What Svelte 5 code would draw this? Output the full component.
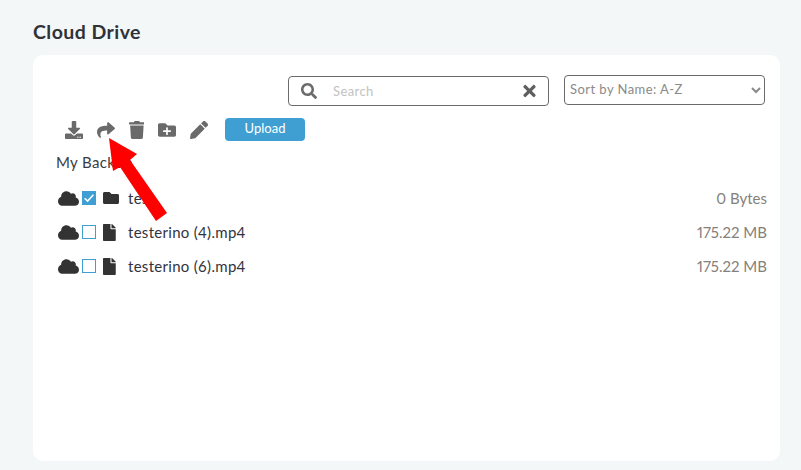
<script>
  const P = {
    download: ['0 0 512 512', 'M216 0h80c13.3 0 24 10.7 24 24v168h87.7c17.8 0 26.7 21.5 14.1 34.1L269.7 378.3c-7.5 7.5-19.8 7.5-27.3 0L90.1 226.1c-12.6-12.6-3.7-34.1 14.1-34.1H192V24c0-13.3 10.7-24 24-24zm296 376v112c0 13.3-10.7 24-24 24H24c-13.3 0-24-10.7-24-24V376c0-13.3 10.7-24 24-24h146.7l49 49c20.1 20.1 52.5 20.1 72.6 0l49-49H488c13.3 0 24 10.7 24 24zm-124 88c0-11-9-20-20-20s-20 9-20 20 9 20 20 20 20-9 20-20zm64 0c0-11-9-20-20-20s-20 9-20 20 9 20 20 20 20-9 20-20z'],
    share: ['0 0 512 512', 'M503.691 189.836L327.687 37.851C312.281 24.546 288 35.347 288 56.015v80.053C127.371 137.907 0 170.1 0 322.326c0 61.441 39.581 122.309 83.333 154.132 13.653 9.931 33.111-2.533 28.077-18.631C66.066 312.814 132.917 274.316 288 272.085V360c0 20.7 24.3 31.453 39.687 18.164l176.004-152c11.071-9.562 11.086-26.753 0-36.328z'],
    trash: ['0 0 448 512', 'M432 32H312l-9.4-18.7A24 24 0 0 0 281.1 0H166.8a23.72 23.72 0 0 0-21.4 13.3L136 32H16A16 16 0 0 0 0 48v32a16 16 0 0 0 16 16h416a16 16 0 0 0 16-16V48a16 16 0 0 0-16-16zM53.2 467a48 48 0 0 0 47.9 45h245.8a48 48 0 0 0 47.9-45L416 128H32z'],
    folderPlus: ['0 0 512 512', 'M464 128H272l-64-64H48C21.49 64 0 85.49 0 112v288c0 26.51 21.49 48 48 48h416c26.51 0 48-21.49 48-48V176c0-26.51-21.49-48-48-48zm-96 168c0 8.84-7.16 16-16 16h-72v72c0 8.84-7.16 16-16 16h-16c-8.84 0-16-7.16-16-16v-72h-72c-8.84 0-16-7.16-16-16v-16c0-8.84 7.16-16 16-16h72v-72c0-8.84 7.16-16 16-16h16c8.84 0 16 7.16 16 16v72h72c8.84 0 16 7.16 16 16v16z'],
    pencil: ['0 0 512 512', 'M497.9 142.1l-46.1 46.1c-4.7 4.7-12.3 4.7-17 0l-111-111c-4.7-4.7-4.7-12.3 0-17l46.1-46.1c18.7-18.7 49.1-18.7 67.9 0l60.1 60.1c18.8 18.7 18.8 49.1 0 67.9zM284.2 99.8L21.6 362.4.4 483.9c-2.9 16.4 11.4 30.6 27.8 27.8l121.5-21.3 262.6-262.6c4.7-4.7 4.7-12.3 0-17l-111-111c-4.8-4.7-12.4-4.7-17.1 0z'],
    search: ['0 0 512 512', 'M505 442.7L405.3 343c-4.5-4.5-10.6-7-17-7H372c27.6-35.3 44-79.7 44-128C416 93.1 322.9 0 208 0S0 93.1 0 208s93.1 208 208 208c48.3 0 92.7-16.4 128-44v16.3c0 6.4 2.5 12.5 7 17l99.7 99.7c9.4 9.4 24.6 9.4 33.9 0l28.3-28.3c9.4-9.4 9.4-24.6.1-34zM208 336c-70.7 0-128-57.2-128-128 0-70.7 57.2-128 128-128 70.7 0 128 57.2 128 128 0 70.7-57.2 128-128 128z'],
    times: ['0 0 352 512', 'M242.72 256l100.07-100.07c12.28-12.28 12.28-32.19 0-44.48l-22.24-22.24c-12.28-12.28-32.19-12.28-44.48 0L176 189.28 75.93 89.21c-12.28-12.28-32.19-12.28-44.48 0L9.21 111.45c-12.28 12.28-12.28 32.19 0 44.48L109.28 256 9.21 356.07c-12.28 12.28-12.28 32.19 0 44.48l22.24 22.24c12.28 12.28 32.2 12.28 44.48 0L176 322.72l100.07 100.07c12.28 12.28 32.2 12.28 44.48 0l22.24-22.24c12.28-12.28 12.28-32.19 0-44.48L242.72 256z'],
    cloud: ['0 0 640 512', 'M537.6 226.6c4.1-10.7 6.4-22.4 6.4-34.6 0-53-43-96-96-96-19.7 0-38.1 6-53.3 16.2C367 64.2 315.3 32 256 32c-88.4 0-160 71.6-160 160 0 2.7.1 5.4.2 8.1C40.2 219.8 0 273.2 0 336c0 79.5 64.5 144 144 144h368c70.7 0 128-57.3 128-128 0-61.9-44-113.6-102.4-125.4z'],
    folder: ['0 0 512 512', 'M464 128H272l-64-64H48C21.49 64 0 85.49 0 112v288c0 26.51 21.49 48 48 48h416c26.51 0 48-21.49 48-48V176c0-26.51-21.49-48-48-48z'],
    file: ['0 0 384 512', 'M224 136V0H24C10.7 0 0 10.7 0 24v464c0 13.3 10.7 24 24 24h336c13.3 0 24-10.7 24-24V160H248c-13.2 0-24-10.8-24-24zm160-14.1v6.1H256V0h6.1c6.4 0 12.5 2.5 17 7l97.9 98c4.5 4.5 7 10.6 7 16.9z']
  };
  const tools = ['download', 'share', 'trash', 'folderPlus', 'pencil'];
  const rows = [
    { type: 'folder', name: 'test', size: '0 Bytes', checked: true },
    { type: 'file', name: 'testerino (4).mp4', size: '175.22 MB', checked: false },
    { type: 'file', name: 'testerino (6).mp4', size: '175.22 MB', checked: false }
  ];
</script>

{#snippet icon(name, cls)}
  <svg class={cls} viewBox={P[name][0]} aria-hidden="true"><path d={P[name][1]} /></svg>
{/snippet}

<main class="page">
  <h1>Cloud Drive</h1>
  <section class="card">
    <div class="filters">
      <div class="search">
        {@render icon('search', 'search-icon')}
        <input type="text" placeholder="Search" />
        {@render icon('times', 'clear-icon')}
      </div>
      <select class="sort">
        <option>Sort by Name: A-Z</option>
      </select>
    </div>
    <div class="toolbar">
      {#each tools as t}
        <button class="tool">{@render icon(t, 'tool-icon')}</button>
      {/each}
      <button class="upload">Upload</button>
    </div>
    <div class="crumb">My Backup</div>
    <ul class="list">
      {#each rows as r}
        <li class="row">
          {@render icon('cloud', 'cloud-icon')}
          <span class="check" class:on={r.checked}>
            {#if r.checked}
              <svg viewBox="0 0 12 12"><path d="M1.6 6.2l3 2.9L10.4 2.8" fill="none" stroke="#fff" stroke-width="1.5" /></svg>
            {/if}
          </span>
          <span class="type">{@render icon(r.type, r.type === 'file' ? 'file-icon' : 'folder-icon')}</span>
          <span class="name">{r.name}</span>
          <span class="size">{r.size}</span>
        </li>
      {/each}
    </ul>
    <svg class="arrow" viewBox="0 0 801 470" aria-hidden="true">
      <polygon points="109,138 137,154 130,160 167,213 156,221 120,167 113,171" fill="#fe0000" />
    </svg>
  </section>
</main>

<style>
  :global(body) {
    margin: 0;
    background: #f3f7f8;
  }
  .page {
    box-sizing: border-box;
    height: 470px;
    padding: 20px 21px 9px 33px;
    display: flex;
    flex-direction: column;
    font-family: Lato, "Open Sans", sans-serif;
    color: #33333d;
    overflow: hidden;
  }
  h1 {
    margin: 0 0 12px;
    font-size: 19.5px;
    line-height: 23px;
    font-weight: 700;
    letter-spacing: 0.45px;
    color: #2f3338;
  }
  .card {
    flex: 1;
    background: #fff;
    border-radius: 10px;
    padding: 20px 13px 0 23px;
  }
  .filters {
    display: flex;
    justify-content: flex-end;
    align-items: flex-start;
    gap: 15px;
    padding-right: 2px;
  }
  .search {
    box-sizing: border-box;
    width: 261px;
    height: 30px;
    margin-top: 1px;
    border: 1px solid #6b6b6b;
    border-radius: 4px;
    display: flex;
    align-items: center;
    padding: 0 12px;
  }
  .search-icon { width: 16px; height: 16px; fill: #6a6a6a; flex: none; }
  .clear-icon { width: 13px; height: 18px; fill: #5f5f5f; flex: none; }
  .search input {
    flex: 1;
    min-width: 0;
    border: 0;
    outline: 0;
    padding: 0 0 0 16px;
    font: 13px Lato, sans-serif;
    letter-spacing: 0.4px;
    background: transparent;
  }
  .search input::placeholder { color: #c2c2c2; opacity: 1; }
  .sort {
    box-sizing: border-box;
    width: 201px;
    height: 30px;
    border: 1px solid #6b6b6b;
    border-radius: 4px;
    background: #fff;
    color: #8a8a8a;
    font: 13px Lato, sans-serif;
    letter-spacing: 0.45px;
    padding: 0 1px 2px;
  }
  .toolbar {
    display: flex;
    align-items: center;
    margin: 12px 0 0 9px;
    gap: 13.75px;
    height: 23px;
  }
  .tool {
    border: 0;
    background: none;
    padding: 0;
    display: flex;
  }
  .tool-icon { height: 18px; width: auto; fill: #6a6a6a; display: block; }
  .upload {
    margin-left: 3.5px;
    width: 80px;
    height: 23px;
    border: 0;
    border-radius: 4px;
    background: #3f9fd3;
    color: #fff;
    font: 13px Lato, sans-serif;
    padding: 0 0 3px;
  }
  .crumb {
    margin: 11px 0 0;
    font-size: 15px;
    line-height: 20px;
    letter-spacing: 0.35px;
    color: #3b3b44;
  }
  .list {
    list-style: none;
    margin: 9px 0 0;
    padding: 0;
  }
  .row {
    display: flex;
    align-items: center;
    height: 34px;
    padding-left: 2px;
  }
  .cloud-icon { width: 21px; height: 17px; fill: #333; flex: none; }
  .check {
    box-sizing: border-box;
    width: 14px;
    height: 14px;
    margin-left: 3px;
    border: 1px solid #3f9fd3;
    flex: none;
  }
  .check.on { background: #3f9fd3; }
  .check svg { display: block; width: 12px; height: 12px; }
  .type {
    width: 16px;
    margin: 0 9px 0 7px;
    display: flex;
    flex: none;
  }
  .folder-icon { width: 16px; height: 16px; fill: #333; display: block; }
  .file-icon { height: 17px; width: auto; fill: #333; display: block; }
  .name {
    font-size: 15px;
    letter-spacing: 0.3px;
    flex: 1;
    color: #33333d;
  }
  .size {
    font-size: 15px;
    font-variant-numeric: proportional-nums;
    color: #86807b;
  }
  .arrow {
    position: absolute;
    left: 0;
    top: 0;
    width: 801px;
    height: 470px;
    pointer-events: none;
  }
</style>
